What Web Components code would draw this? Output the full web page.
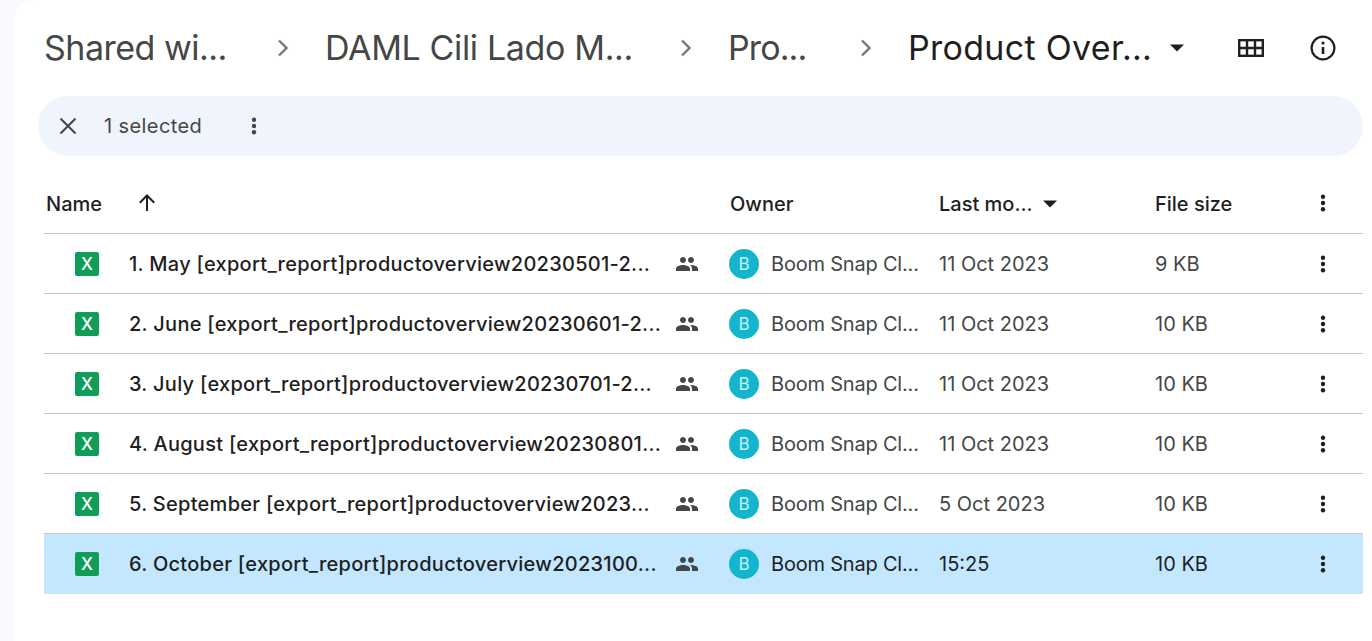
<!DOCTYPE html>
<html lang="en">
<head>
<meta charset="utf-8">
<title>Product Overview - Google Drive</title>
<style>
  html, body { margin: 0; height: 100%; background: #f8fafd; overflow: hidden; }
  body { font-family: Inter, "Noto Sans", sans-serif; }
</style>
</head>
<body>
<drive-panel>
  <drive-breadcrumbs>
    <drive-crumb style="width:251px;--track:-0.5px">Shared wi...</drive-crumb>
    <drive-crumb style="width:373px;--track:-0.35px">DAML Cili Lado M...</drive-crumb>
    <drive-crumb style="width:150px;--track:-0.9px">Pro...</drive-crumb>
    <drive-crumb current style="--track:0.3px">Product Over...</drive-crumb>
  </drive-breadcrumbs>
  <drive-selection-bar>1 selected</drive-selection-bar>
  <drive-list-header></drive-list-header>
  <drive-file-row name="1. May [export_report]productoverview20230501-2..." modified="11 Oct 2023" size="9 KB"></drive-file-row>
  <drive-file-row name="2. June [export_report]productoverview20230601-2..." modified="11 Oct 2023" size="10 KB"></drive-file-row>
  <drive-file-row name="3. July [export_report]productoverview20230701-2..." modified="11 Oct 2023" size="10 KB"></drive-file-row>
  <drive-file-row name="4. August [export_report]productoverview20230801..." modified="11 Oct 2023" size="10 KB"></drive-file-row>
  <drive-file-row name="5. September [export_report]productoverview2023..." modified="5 Oct 2023" size="10 KB"></drive-file-row>
  <drive-file-row selected name="6. October [export_report]productoverview2023100..." modified="15:25" size="10 KB"></drive-file-row>
</drive-panel>

<script type="module">
/* icons shared between components */
const DOTS = `<svg width="24" height="24" viewBox="0 0 24 24" fill="currentColor"><circle cx="12" cy="5.8" r="2.2"/><circle cx="12" cy="12" r="2.2"/><circle cx="12" cy="18.2" r="2.2"/></svg>`;
const CARET = `<svg width="24" height="24" viewBox="0 0 24 24" fill="currentColor"><path d="M5 8.5h14L12 15.5z"/></svg>`;
const CHEVRON = `<svg width="24" height="24" viewBox="0 0 24 24" fill="none" stroke="#747775" stroke-width="2.4"><path d="M8 4.5l7.5 7.5L8 19.5"/></svg>`;
const ROW_COLUMNS = 'grid-template-columns: 686px 209px 216px 1fr 40px 20px;';

class DrivePanel extends HTMLElement {
  constructor() {
    super();
    this.attachShadow({ mode: 'open' }).innerHTML = `
      <style>
        :host {
          display: block; box-sizing: border-box; height: 641px; margin-left: 14px;
          padding: 0 9px 0 30px; background: #fff; border-top-left-radius: 20px;
          color: #1f1f1f; overflow: hidden;
        }
      </style>
      <slot></slot>
    `;
  }
}
customElements.define('drive-panel', DrivePanel);

class DriveBreadcrumbs extends HTMLElement {
  constructor() {
    super();
    this.attachShadow({ mode: 'open' }).innerHTML = `
      <style>
        :host { display: flex; align-items: center; height: 96px; }
        .caret { display: flex; margin-left: 13px; color: #1f1f1f; }
        .grid { display: flex; margin-left: 48px; color: #1f1f1f; }
        .info { display: flex; margin-left: 44px; color: #1f1f1f; }
      </style>
      <slot></slot>
      <span class="caret">${CARET}</span>
      <span class="grid">
        <svg width="28" height="28" viewBox="0 0 28 28" fill="none" stroke="currentColor" stroke-width="2.4"><rect x="2.2" y="6.2" width="23.6" height="15.6"/><path d="M10 6v16M18 6v16M2 14h24"/></svg>
      </span>
      <span class="info">
        <svg width="28" height="28" viewBox="0 0 28 28" fill="none" stroke="currentColor" stroke-width="2.2"><circle cx="14" cy="14" r="11.4"/><path d="M14 13v7" stroke-width="2.6"/><circle cx="14" cy="9" r="1.6" fill="currentColor" stroke="none"/></svg>
      </span>
    `;
  }
}
customElements.define('drive-breadcrumbs', DriveBreadcrumbs);

class DriveCrumb extends HTMLElement {
  constructor() {
    super();
    const current = this.hasAttribute('current');
    this.attachShadow({ mode: 'open' }).innerHTML = `
      <style>
        :host {
          display: flex; align-items: center; justify-content: space-between; flex: none;
          margin-right: ${current ? 0 : 30}px;
          font-size: 34px; white-space: nowrap;
          color: ${current ? '#1f1f1f' : '#444746'};
        }
        .text { letter-spacing: var(--track, 0); padding-bottom: 2px; }
        svg { display: block; }
      </style>
      <span class="text"><slot></slot></span>
      ${current ? '' : CHEVRON}
    `;
  }
}
customElements.define('drive-crumb', DriveCrumb);

class DriveSelectionBar extends HTMLElement {
  constructor() {
    super();
    this.attachShadow({ mode: 'open' }).innerHTML = `
      <style>
        :host {
          display: flex; align-items: center; height: 60px; margin-left: -6px;
          padding-left: 18px; border-radius: 30px; background: #f0f4fc;
          color: #444746; font-size: 20px;
        }
        .close { display: flex; margin-right: 24px; }
        .label { width: 138px; letter-spacing: 0.4px; }
        .dots { display: flex; }
      </style>
      <span class="close">
        <svg width="24" height="24" viewBox="0 0 24 24" fill="none" stroke="currentColor" stroke-width="2"><path d="M4.5 4.5l15 15M19.5 4.5l-15 15"/></svg>
      </span>
      <span class="label"><slot></slot></span>
      <span class="dots">${DOTS}</span>
    `;
  }
}
customElements.define('drive-selection-bar', DriveSelectionBar);

class DriveListHeader extends HTMLElement {
  constructor() {
    super();
    this.attachShadow({ mode: 'open' }).innerHTML = `
      <style>
        :host {
          display: grid; ${ROW_COLUMNS} align-items: center; height: 78px; padding-top: 18px;
          box-sizing: border-box; border-bottom: 1px solid #c7c7c7;
          color: #1f1f1f; font-size: 20px; font-weight: 500;
        }
        .cell { display: flex; align-items: center; }
        .name { padding-left: 2px; }
        .sort { display: flex; margin-top: -2px; margin-left: 33px; }
        .caret { display: flex; margin-left: 5px; }
        .more { display: flex; justify-content: center; grid-column: 5; margin-top: -2px; }
      </style>
      <div class="cell name">Name
        <span class="sort"><svg width="24" height="24" viewBox="0 0 24 24" fill="none" stroke="currentColor" stroke-width="2"><path d="M12 20V4.5M4.8 11.7L12 4.5l7.2 7.2"/></svg></span>
      </div>
      <div class="cell">Owner</div>
      <div class="cell">Last mo...<span class="caret">${CARET}</span></div>
      <div class="cell">File size</div>
      <div class="more">${DOTS}</div>
    `;
  }
}
customElements.define('drive-list-header', DriveListHeader);

class DriveFileRow extends HTMLElement {
  connectedCallback() {
    if (this.shadowRoot) return;
    const selected = this.hasAttribute('selected');
    const text = selected ? '#1f1f1f' : '#444746';
    this.attachShadow({ mode: 'open' }).innerHTML = `
      <style>
        :host {
          display: grid; ${ROW_COLUMNS} align-items: center; height: 60px;
          box-sizing: border-box; border-bottom: ${selected ? 0 : '1px solid #c7c7c7'};
          background: ${selected ? '#c2e7ff' : 'transparent'};
          color: ${text}; font-size: 20px; white-space: nowrap;
        }
        .name-cell { display: flex; align-items: center; padding-left: 31px; }
        .xls {
          flex: none; display: flex; align-items: center; justify-content: center;
          width: 24px; height: 24px; border-radius: 2px; background: #0f9d58;
          color: #fff; font-size: 17px; font-weight: 500;
        }
        .name { flex: 1; margin-left: 30px; color: #1f1f1f; font-weight: 500; letter-spacing: 0.27px; }
        .shared { display: flex; color: #444746; margin-left: auto; padding-right: 31px; }
        .owner { display: flex; align-items: center; margin-left: -1px; letter-spacing: -0.2px; }
        .avatar {
          display: flex; align-items: center; justify-content: center; flex: none;
          width: 30px; height: 30px; border-radius: 50%; background: #12b5cb;
          color: #c5eff5; font-size: 17px; margin-right: 12px;
        }
        .more { display: flex; justify-content: center; grid-column: 5; color: #1f1f1f; }
      </style>
      <div class="name-cell">
        <span class="xls">X</span>
        <span class="name">${this.getAttribute('name')}</span>
        <span class="shared"><svg width="24" height="24" viewBox="0 0 24 24" fill="currentColor"><path d="M16 11c1.66 0 2.99-1.34 2.99-3S17.66 5 16 5s-3 1.34-3 3 1.34 3 3 3zm-8 0c1.66 0 2.99-1.34 2.99-3S9.66 5 8 5 5 6.34 5 8s1.34 3 3 3zm0 2c-2.33 0-7 1.17-7 3.5V19h14v-2.5C15 14.17 10.33 13 8 13zm8 0c-.29 0-.62.02-.97.05 1.16.84 1.97 1.97 1.97 3.45V19h6v-2.5c0-2.33-4.67-3.5-7-3.5z"/></svg></span>
      </div>
      <div class="owner"><span class="avatar">B</span>Boom Snap Cl...</div>
      <div>${this.getAttribute('modified')}</div>
      <div>${this.getAttribute('size')}</div>
      <div class="more">${DOTS}</div>
    `;
  }
}
customElements.define('drive-file-row', DriveFileRow);
</script>
</body>
</html>
